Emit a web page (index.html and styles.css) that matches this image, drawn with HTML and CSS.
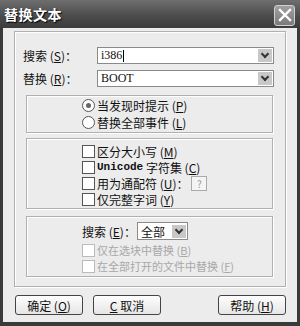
FILE: index.html
```html
<!DOCTYPE html>
<html lang="zh-CN">
<head>
  <meta charset="UTF-8">
  <title>替换文本</title>
  <link rel="stylesheet" href="styles.css">
</head>
<body>
  <div class="window">
    <div class="titlebar">
      <span class="title">替换文本</span>
      <span class="close">
        <svg width="14" height="14" viewBox="0 0 14 14"><path d="M2 2 L12 12 M12 2 L2 12" stroke="#fff" stroke-width="2.4" stroke-linecap="square"/></svg>
      </span>
    </div>

    <div class="content">
      <div class="group">
        <div class="field">
          <span class="label">搜索 (<u>S</u>)：</span>
          <div class="combo"><span class="value">i386<span class="caret"></span></span><span class="drop"></span></div>
        </div>
        <div class="field">
          <span class="label">替换 (<u>R</u>)：</span>
          <div class="combo"><span class="value">BOOT</span><span class="drop"></span></div>
        </div>

        <div class="panel radios">
          <div class="opt"><span class="radio checked"></span>当发现时提示 (<u>P</u>)</div>
          <div class="opt"><span class="radio"></span>替换全部事件 (<u>L</u>)</div>
        </div>

        <div class="panel checks">
          <div class="opt"><span class="box"></span>区分大小写 (<u>M</u>)</div>
          <div class="opt"><span class="box"></span><span class="mono">Unicode</span>&nbsp;字符集 (<u>C</u>)</div>
          <div class="opt"><span class="box"></span>用为通配符 (<u>U</u>)：<span class="wild">?</span></div>
          <div class="opt"><span class="box"></span>仅完整字词 (<u>Y</u>)</div>
        </div>

        <div class="panel scope">
          <div class="scope-row">
            <span class="label">搜索 (<u>E</u>)：</span>
            <div class="combo small"><span class="value">全部</span><span class="drop"></span></div>
          </div>
          <div class="opt off"><span class="box"></span>仅在选块中替换 (<u>B</u>)</div>
          <div class="opt off"><span class="box"></span>在全部打开的文件中替换 (<u>F</u>)</div>
        </div>
      </div>

      <div class="buttons">
        <button>确定 (<u>O</u>)</button>
        <button><u>C</u>&nbsp;取消</button>
        <button>帮助 (<u>H</u>)</button>
      </div>
    </div>
  </div>
</body>
</html>
```

FILE: styles.css
```css
body {
  margin: 0;
  font-family: "Noto Sans CJK SC", "Liberation Sans", sans-serif;
  font-size: 12px;
  color: #111;
}

.window {
  width: 300px;
  height: 326px;
  background: #3a3a3a;
  display: flex;
  flex-direction: column;
  box-sizing: border-box;
}

.titlebar {
  height: 28px;
  display: flex;
  align-items: center;
  justify-content: space-between;
  padding: 0 5px 0 4px;
  background: linear-gradient(#6e6e6e, #4a4a4a 60%, #3c3c3c);
}

.title {
  color: #fff;
  font-weight: bold;
  font-size: 14px;
  letter-spacing: 0.5px;
  text-shadow: 1px 1px 1px #000;
}

.close {
  width: 19px;
  height: 19px;
  border: 1px solid #d0d0d0;
  border-radius: 3px;
  background: linear-gradient(#a0a0a0, #7a7a7a);
  display: flex;
  align-items: center;
  justify-content: center;
  margin-top: 2px;
}

.content {
  flex: 1;
  margin: 0 3px 4px;
  background: #ececec;
  padding: 3px 11px 0;
  display: flex;
  flex-direction: column;
}

.group {
  border: 1px solid #b0b0b0;
  box-shadow: inset 1px 1px #fff, 1px 1px #fff;
  padding: 15px 11px 6px 8px;
  height: 256px;
  box-sizing: border-box;
}

.field {
  display: flex;
  align-items: center;
  height: 17px;
  margin-bottom: 6px;
}

.field .label {
  width: 74px;
}

.combo {
  flex: 1;
  height: 17px;
  border: 1px solid #8a8a8a;
  background: #fff;
  display: flex;
  align-items: center;
  justify-content: space-between;
  box-sizing: border-box;
}

.value {
  font-family: "Liberation Serif", serif;
  font-size: 12px;
  padding-left: 3px;
  display: flex;
  align-items: center;
}

.caret {
  width: 1px;
  height: 12px;
  background: #000;
  margin-left: 1px;
}

.drop {
  width: 14px;
  height: 13px;
  margin-right: 1px;
  background: #c8c8c8;
  position: relative;
}

.drop::after {
  content: "";
  position: absolute;
  left: 4px;
  top: 2px;
  width: 4px;
  height: 4px;
  border-right: 2px solid #333;
  border-bottom: 2px solid #333;
  transform: rotate(45deg);
}

.panel {
  margin: 0 1px 0 3px;
  border: 1px solid #b0b0b0;
  box-shadow: inset 1px 1px #fff, 1px 1px #fff;
  padding-left: 55px;
}

.radios {
  margin-top: 8px;
  padding-top: 1px;
  padding-bottom: 1px;
}

.radios .opt {
  height: 17px;
}

.checks {
  margin-top: 5px;
  padding-top: 4px;
  padding-bottom: 1px;
}

.checks .opt {
  height: 16px;
}

.opt {
  display: flex;
  align-items: center;
  white-space: nowrap;
}

.radio {
  width: 11px;
  height: 11px;
  border: 1px solid #555;
  border-radius: 50%;
  background: #fff;
  margin-right: 2px;
  display: flex;
  align-items: center;
  justify-content: center;
}

.radio.checked::after {
  content: "";
  width: 5px;
  height: 5px;
  border-radius: 50%;
  background: #666;
}

.box {
  width: 11px;
  height: 11px;
  border: 1px solid #555;
  background: #fff;
  margin-right: 2px;
}

.mono {
  font-family: "Liberation Mono", monospace;
  font-size: 11px;
  font-weight: bold;
}

.wild {
  width: 14px;
  height: 13px;
  border: 1px solid #aaa;
  background: #f4f4f4;
  color: #999;
  font-size: 10px;
  line-height: 13px;
  text-align: center;
  margin-left: 3px;
}

.scope {
  margin-top: 7px;
  padding-top: 5px;
  padding-bottom: 2px;
}

.scope-row {
  display: flex;
  align-items: center;
  margin-bottom: 2px;
}

.scope-row .label {
  width: 55px;
}

.combo.small {
  flex: none;
  width: 51px;
  height: 18px;
}

.combo.small .value {
  font-family: "Noto Sans CJK SC", sans-serif;
}

.opt.off {
  height: 16px;
  line-height: 16px;
  font-size: 11px;
  color: #a8a8a8;
}

.opt.off .box {
  border-color: #bbb;
}

.buttons {
  display: flex;
  justify-content: space-between;
  padding: 0 0 0 1px;
  margin-top: 8px;
}

.buttons button {
  width: 68px;
  height: 20px;
  padding: 0;
  font-family: "Noto Sans CJK SC", sans-serif;
  font-size: 12px;
  color: #111;
  border: 1px solid #444;
  border-radius: 3px;
  background: linear-gradient(#fdfdfd, #e6e6e6);
}

.buttons button:nth-child(2) {
  margin-right: 47px;
}
```
